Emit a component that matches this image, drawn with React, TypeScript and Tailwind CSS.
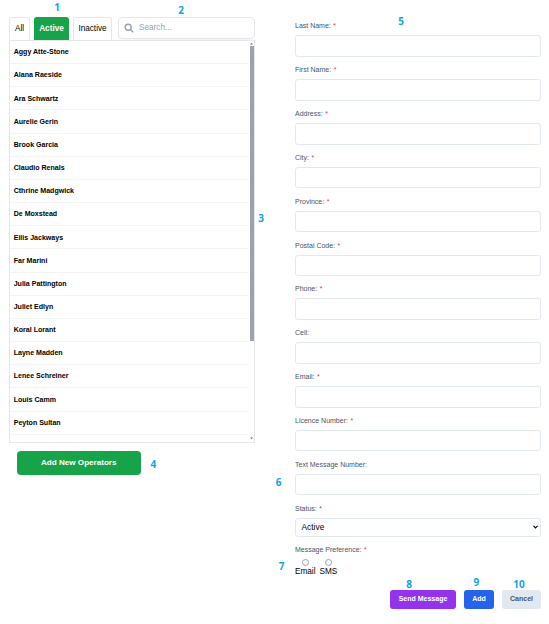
const operators = [
  'Aggy Atte-Stone', 'Alana Raeside', 'Ara Schwartz', 'Aurelie Gerin', 'Brook Garcia',
  'Claudio Renals', 'Cthrine Madgwick', 'De Moxstead', 'Eilis Jackways', 'Far Marini',
  'Julia Pattington', 'Juliet Edlyn', 'Koral Lorant', 'Layne Madden', 'Lenee Schreiner',
  'Louis Camm', 'Peyton Sultan',
];

const fields = [
  { label: 'Last Name:', required: true },
  { label: 'First Name:', required: true },
  { label: 'Address:', required: true },
  { label: 'City:', required: true },
  { label: 'Province:', required: true },
  { label: 'Postal Code:', required: true },
  { label: 'Phone:', required: true },
  { label: 'Cell:', required: false },
  { label: 'Email:', required: true },
  { label: 'Licence Number:', required: true },
  { label: 'Text Message Number:', required: false },
];

const callouts = [
  { n: 1, x: 57, y: 7 },
  { n: 2, x: 181, y: 9.5 },
  { n: 3, x: 261, y: 217.5 },
  { n: 4, x: 153.3, y: 464 },
  { n: 5, x: 401, y: 21 },
  { n: 6, x: 278.5, y: 482 },
  { n: 7, x: 281.5, y: 565.5 },
  { n: 8, x: 409, y: 583.5 },
  { n: 9, x: 476.3, y: 581.5 },
  { n: 10, x: 519, y: 583.5 },
];

function Label({ text, required }: { text: string; required: boolean }) {
  return (
    <label className="block h-[10px] whitespace-nowrap text-[7px] leading-[10px] text-slate-600">
      {text}
      {required && <span className="ml-[2.5px] text-red-500">*</span>}
    </label>
  );
}

function OperatorPanel() {
  return (
    <section className="w-[246px] pt-[17px]">
      <div className="flex h-[23px] text-[8.2px]">
        <button className="h-full w-[21px] rounded-t-[3px] border border-b-0 border-gray-200 text-black">All</button>
        <button className="ml-1 h-full w-[35px] rounded-t-[3px] bg-[#16a34a] pt-px font-bold text-white">Active</button>
        <button className="ml-1 h-full w-[39px] rounded-t-[3px] border border-b-0 border-gray-200 text-black">Inactive</button>
        <div className="ml-[6px] flex h-[21.5px] flex-1 items-center rounded-[4px] border border-gray-200 pl-[5px] shadow-[0_1px_1px_rgba(0,0,0,0.04)]">
          <svg className="h-[10px] w-[10px] text-gray-400" viewBox="0 0 10 10" fill="none" stroke="currentColor" strokeWidth="1.4">
            <circle cx="4.2" cy="4.2" r="3" />
            <path d="M6.4 6.4 L9.2 9.2" />
          </svg>
          <span className="ml-[5px] text-[8.2px] text-gray-400">Search...</span>
        </div>
      </div>
      <div className="flex h-[403px] border border-gray-200">
        <ul className="flex-1 overflow-hidden">
          {operators.map((name) => (
            <li key={name} className="flex h-[23.17px] items-center border-b border-gray-100 pl-[3.7px] pt-px text-[7.05px] font-bold text-black">
              {name}
            </li>
          ))}
        </ul>
        <div className="flex w-[5px] flex-col items-center">
          <svg className="h-[5px] w-[5px]" viewBox="0 0 5 5"><path d="M1 3.5 L2.5 1.8 L4 3.5Z" fill="#777" /></svg>
          <div className="h-[295px] w-[4px] bg-[#9ca3af]" />
          <div className="flex-1" />
          <svg className="mb-[1px] h-[5px] w-[5px]" viewBox="0 0 5 5"><path d="M1 1.5 L2.5 3.2 L4 1.5Z" fill="#777" /></svg>
        </div>
      </div>
      <button className="ml-2 mt-[8px] h-[24px] w-[123.5px] rounded-[4px] bg-[#16a34a] pt-px text-[8.1px] font-bold text-white">
        Add New Operators
      </button>
    </section>
  );
}

function OperatorForm() {
  return (
    <section className="ml-[40px] w-[246px] pt-[21.4px]">
      {fields.map((f) => (
        <div key={f.label} className="h-[43.83px]">
          <Label text={f.label} required={f.required} />
          <input className="mt-[4px] block h-[21.5px] w-full rounded-[3px] border border-slate-200 bg-white" />
        </div>
      ))}
      <Label text="Status:" required />
      <div className="mt-[4px] flex h-[19.5px] items-center justify-between rounded-[3px] border border-slate-200 pl-[5.5px] pr-[2px] text-[8.4px] text-black">
        <span>Active</span>
        <svg className="h-[4px] w-[5px]" viewBox="0 0 5 4" fill="none" stroke="#000" strokeWidth="1.2"><path d="M.5 .8 L2.5 2.8 L4.5 .8" /></svg>
      </div>
      <div className="mt-[7.6px]">
        <Label text="Message Preference:" required />
      </div>
      <div className="mt-[4px] flex gap-[4px] text-[8.2px] leading-[10px] text-black">
        {['Email', 'SMS'].map((option) => (
          <label key={option} className="flex flex-col items-center">
            <span className="h-[7px] w-[7px] rounded-full border border-gray-400 bg-white" />
            <span className="mt-[1.5px]">{option}</span>
          </label>
        ))}
      </div>
      <div className="mt-[12.5px] flex h-[19px] justify-end gap-2 text-[7px] font-bold">
        <button className="w-[66px] rounded-[3px] bg-[#9333ea] pt-px text-white">Send Message</button>
        <button className="w-[30px] rounded-[3px] bg-[#2563eb] pt-px text-white">Add</button>
        <button className="w-[39px] rounded-[3px] bg-[#e2e8f0] pt-px text-slate-600">Cancel</button>
      </div>
    </section>
  );
}

export default function App() {
  return (
    <main className="relative flex h-[624px] w-[549px] overflow-hidden bg-white pl-[9px] font-['Liberation_Sans',Arial,sans-serif] text-gray-900">
      <OperatorPanel />
      <OperatorForm />
      {callouts.map((c) => (
        <span
          key={c.n}
          className="absolute -translate-x-1/2 -translate-y-1/2 font-['Open_Sans',sans-serif] text-[10px] font-bold leading-none text-[#13a3e8]"
          style={{ left: c.x, top: c.y }}
        >
          {c.n}
        </span>
      ))}
    </main>
  );
}
